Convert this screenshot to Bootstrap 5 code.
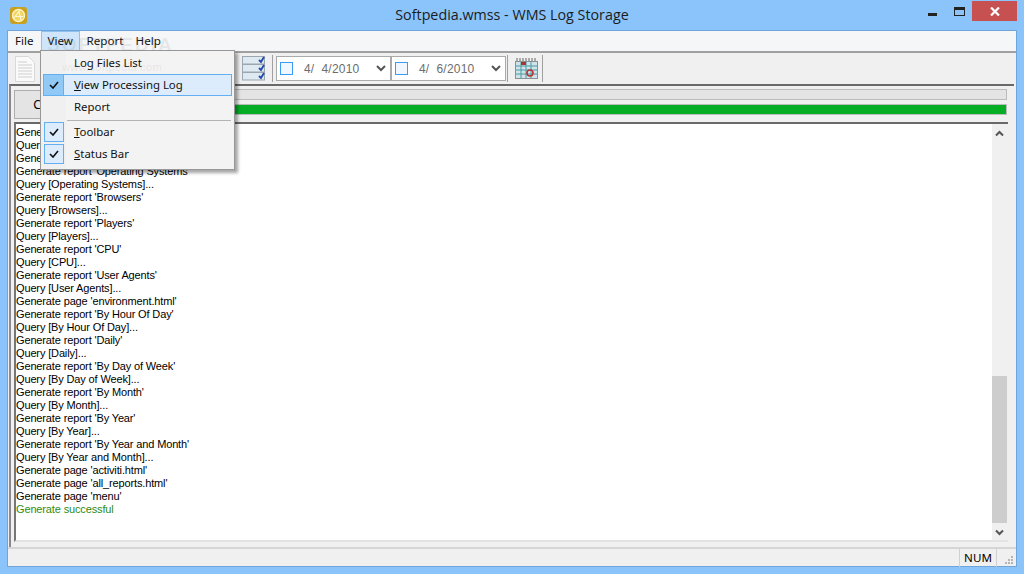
<!DOCTYPE html>
<html lang="en">
<head>
<meta charset="utf-8">
<title>WMS Log Storage</title>
<link href="https://cdn.jsdelivr.net/npm/bootstrap@5.3.0/dist/css/bootstrap.min.css" rel="stylesheet">
<style>
html,body{height:100%;overflow:hidden}
body{background:#8ac4fa;font-family:"Liberation Sans",Arial,sans-serif;color:#000;position:relative;width:1024px;height:574px}
.wintop{height:31px;position:relative}
.wintitle{font-family:"Open Sans","Noto Sans",sans-serif;font-size:14.3px;line-height:30px;color:#1c1c1c;text-align:center;padding-left:0}
.appicon{position:absolute;left:10px;top:7px}
.wmin{position:absolute;left:928px;top:13px;width:9px;height:3px;background:#222}
.wmax{position:absolute;left:954px;top:7px;width:11px;height:9px;border:1px solid #222;border-top-width:3px}
.wclose{position:absolute;left:972px;top:1px;width:45px;height:20px;background:#c75050;display:flex;align-items:center;justify-content:center}
.client{margin:0 8px;height:535px;background:#f0f0f0;box-shadow:0 0 0 1px #6fa5d8;position:relative}
.menubar{height:20px;background:#f5f6f7;font-family:"Noto Sans",sans-serif;font-size:11.6px;line-height:18px;color:#111}
.mitem{padding:0 6px;height:20px;border:1px solid transparent;margin:0;min-width:32px}
.mitem.on{background:#cfe5f9;border-color:#8fc1ee;width:39px}
.w-report{width:49px}
.mark-wm{position:absolute;color:rgba(120,120,120,.12);pointer-events:none;z-index:6;white-space:nowrap}
.mark-big{left:47px;top:31px;font-size:19px;font-weight:700;letter-spacing:2px}
.mark-small{left:62px;top:59px;font-size:11px;letter-spacing:.3px}
.toolrow{height:33px;border-top:2px solid #a0a0a0;background:#f0f0f0;padding-left:7px}
.tsep{width:1px;height:27px;background:#a0a0a0}
.tool-check{margin-left:207px}
.sep-a{margin-left:6px}
.date-a{margin-left:3px}
.sep-b{margin-left:1px}
.cal-ic{margin-left:7px}
.datebox{width:115px;height:25px;background:#fff;border:1px solid #aaa;font-family:"Liberation Sans",sans-serif;font-size:12px;color:#6d6d6d;padding-left:3px;letter-spacing:.2px}
.ckbox{width:13px;height:13px;border:1px solid #3a9bf2;background:#f0f7fe;margin-right:11px}
.panel{height:463px;border-top:2px solid #696969;border-left:2px solid #8a8a8a;margin-left:1px;margin-right:2px;padding:3px 6px 0 3px}
.toprow{height:31px}
.barcol{margin-right:1px}
.closebtn{width:76px;height:29px;margin-top:1px;font-family:"Noto Sans",sans-serif;font-size:12px;line-height:1;background:#e4e4e4;border:1px solid #adadad;border-radius:0;color:#000;padding:0}
.bar1{height:11px;background:#e4e4e4;border:1px solid #bcbcbc}
.bar2{height:11px;background:#06ae26;border:1px solid #bcbcbc;margin-top:4px}
.logwrap{height:420px;border-top:2px solid #696969;border-left:2px solid #777;border-bottom:2px solid #e3e3e3;background:#fff;margin-top:2px;position:relative}
.loglines{font-family:"Liberation Sans",sans-serif;font-size:11px;letter-spacing:-.14px;line-height:13px;padding:2px 0 0 0;white-space:pre}
.ok{color:#2e8b12}
.sb{width:16px;background:#f0f0f0;position:relative}
.thumb{position:absolute;left:0;right:1px;top:252px;height:147px;background:#cdcdcd}
.sbu{position:absolute;left:3px;top:6px}
.sbd{position:absolute;left:3px;top:405px}
.statusbar{height:20px;border-top:2px solid #d6d6d6;font-family:"Noto Sans",sans-serif;font-size:11.6px;position:relative}
.stcell{width:38px;border-left:1px solid #d0d0d0;border-right:1px solid #d0d0d0;text-align:center;line-height:18px;height:18px}
.stpad{width:19px}
.grip{position:absolute;right:2px;bottom:2px}
.viewmenu{position:absolute;left:40px;top:50px;width:195px;height:120px;margin:0;padding:0;display:block;border:1px solid #979797;border-radius:0;background:#f3f3f3;box-shadow:3px 3px 3px rgba(0,0,0,.35);font-family:"Noto Sans",sans-serif;font-size:11.4px;z-index:5}
.viewmenu::before{content:"";position:absolute;left:0;top:0;bottom:0;width:25px;background:#f0f0f0}
.vitem{height:22px;line-height:19px;padding-left:30px;position:relative;border:1px solid transparent;margin-left:2px;margin-right:2px;width:auto;color:#111;background:transparent}
.vitem:first-child{margin-top:1px}
.vitem.hot{background:#dcecfc;border-color:#64aef2}
.vcheck{position:absolute;left:0;top:0;width:20px;height:20px;display:flex;align-items:center;justify-content:center;background:#dcecfc;border:1px solid #64aef2}
.hot .vcheck{background:#90c8f6;top:-1px;height:22px;left:-1px;width:21px}
.vdiv{height:1px;background:#b4b4b4;margin:2px 3px 0 26px;opacity:1;border:0}
</style>
</head>
<body>
<div class="wintop">
  <svg class="appicon" width="17" height="17" viewBox="0 0 17 17"><rect width="17" height="17" rx="3" fill="#c9a11e"/><circle cx="8.5" cy="8.5" r="6" fill="#f2d65f" stroke="#fff3c4" stroke-width="1.4"/><path d="M3.5 11.5 9 4.5l2 8.5M6 9.5h7" fill="none" stroke="#fff8dc" stroke-width="1.2"/></svg>
  <div class="wintitle">Softpedia.wmss - WMS Log Storage</div>
  <div class="wmin"></div><div class="wmax"></div>
  <div class="wclose"><svg width="10" height="9" viewBox="0 0 10 9"><path d="M1 .5 9 8.5M9 .5 1 8.5" stroke="#fff" stroke-width="2.2"/></svg></div>
</div>
<div class="client">
  <div class="menubar d-flex">
    <div class="mitem">File</div><div class="mitem on">View</div><div class="mitem w-report">Report</div><div class="mitem">Help</div>
  </div>
  <div class="toolrow d-flex align-items-center">
    <svg width="20" height="26" viewBox="0 0 20 26"><path d="M.5.5h13l6 6v19H.5z" fill="#fafafa" stroke="#d8d8d8"/><path d="M3 6h9M3 9h14M3 12h14M3 15h14M3 18h14M3 21h14" stroke="#cfcfcf"/></svg>
    <svg class="tool-check" width="24" height="25" viewBox="0 0 24 25"><g fill="#dfe9f2" stroke="#9aa7b2"><rect x=".5" y=".5" width="22" height="7.5"/><rect x=".5" y="8.5" width="22" height="7.5"/><rect x=".5" y="16.5" width="22" height="7.5"/></g><path d="M17 4l2 2 3-5M17 12l2 2 3-5M17 20l2 2 3-5" fill="none" stroke="#2b4fa8" stroke-width="2"/></svg>
    <div class="tsep sep-a"></div>
    <div class="datebox date-a d-flex align-items-center"><span class="ckbox"></span><span>4/&nbsp; 4/2010</span>
      <svg class="ms-auto me-1" width="10" height="7" viewBox="0 0 10 7"><path d="M1 1l4 4 4-4" fill="none" stroke="#555" stroke-width="2"/></svg></div>
    <div class="datebox d-flex align-items-center"><span class="ckbox"></span><span>4/&nbsp; 6/2010</span>
      <svg class="ms-auto me-1" width="10" height="7" viewBox="0 0 10 7"><path d="M1 1l4 4 4-4" fill="none" stroke="#555" stroke-width="2"/></svg></div>
    <div class="tsep sep-b"></div>
    <svg class="cal-ic" width="23" height="21" viewBox="0 0 23 21"><path d="M2 0v3M5 0v3M8 0v3M11 0v3M14 0v3M17 0v3M20 0v3" stroke="#666"/><rect x=".5" y="3.5" width="22" height="17" fill="#cfe3e8" stroke="#8a8f92"/><path d="M1 8h21M1 12h21M1 16h21M6 4v16M11 4v16M16 4v16" stroke="#4a9aa6"/><rect x="6" y="4" width="5" height="3" fill="#a33"/><circle cx="15" cy="15" r="3" fill="none" stroke="#b33" stroke-width="1.5"/></svg>
    <div class="tsep ms-1"></div>
  </div>
  <div class="panel">
    <div class="toprow d-flex gap-1">
      <button class="btn closebtn" type="button">Cancel</button>
      <div class="flex-grow-1 barcol"><div class="bar1"></div><div class="bar2"></div></div>
    </div>
    <div class="logwrap d-flex">
      <div class="loglines flex-grow-1">Generate page 'environment.html'
Query [Screen Colors]...
Generate report 'Screen Colors'
Generate report 'Operating Systems'
Query [Operating Systems]...
Generate report 'Browsers'
Query [Browsers]...
Generate report 'Players'
Query [Players]...
Generate report 'CPU'
Query [CPU]...
Generate report 'User Agents'
Query [User Agents]...
Generate page 'environment.html'
Generate report 'By Hour Of Day'
Query [By Hour Of Day]...
Generate report 'Daily'
Query [Daily]...
Generate report 'By Day of Week'
Query [By Day of Week]...
Generate report 'By Month'
Query [By Month]...
Generate report 'By Year'
Query [By Year]...
Generate report 'By Year and Month'
Query [By Year and Month]...
Generate page 'activiti.html'
Generate page 'all_reports.html'
Generate page 'menu'
<span class="ok">Generate successful</span></div>
      <div class="sb">
        <div class="thumb"></div>
        <svg class="sbu" width="9" height="7" viewBox="0 0 9 7"><path d="M1 5.5l3.5-3.5 3.5 3.5" fill="none" stroke="#555" stroke-width="2"/></svg>
        <svg class="sbd" width="9" height="7" viewBox="0 0 9 7"><path d="M1 1.5l3.5 3.5 3.5-3.5" fill="none" stroke="#555" stroke-width="2"/></svg>
      </div>
    </div>
  </div>
  <div class="statusbar d-flex justify-content-end">
    <div class="stcell">NUM</div>
    <div class="flex-shrink-0 stpad"></div>
    <svg class="grip" width="10" height="10" viewBox="0 0 10 10"><path d="M7 1h2v2H7zM4 4h2v2H4zM7 4h2v2H7zM1 7h2v2H1zM4 7h2v2H4zM7 7h2v2H7z" fill="#b5b5b5"/></svg>
  </div>
</div>
<div class="dropdown-menu viewmenu">
  <div class="vitem">Log Files List</div>
  <div class="vitem hot"><span class="vcheck"><svg width="10" height="8" viewBox="0 0 10 8"><path d="M1 4l3 3 5-6" fill="none" stroke="#111" stroke-width="1.6"/></svg></span><u>V</u>iew Processing Log</div>
  <div class="vitem">Report</div>
  <hr class="vdiv">
  <div class="vitem"><span class="vcheck"><svg width="10" height="8" viewBox="0 0 10 8"><path d="M1 4l3 3 5-6" fill="none" stroke="#111" stroke-width="1.6"/></svg></span><u>T</u>oolbar</div>
  <div class="vitem"><span class="vcheck"><svg width="10" height="8" viewBox="0 0 10 8"><path d="M1 4l3 3 5-6" fill="none" stroke="#111" stroke-width="1.6"/></svg></span><u>S</u>tatus Bar</div>
</div>
<div class="mark-wm mark-big">SOFTPEDIA</div>
<div class="mark-wm mark-small">www.softpedia.com</div>
</body>
</html>
